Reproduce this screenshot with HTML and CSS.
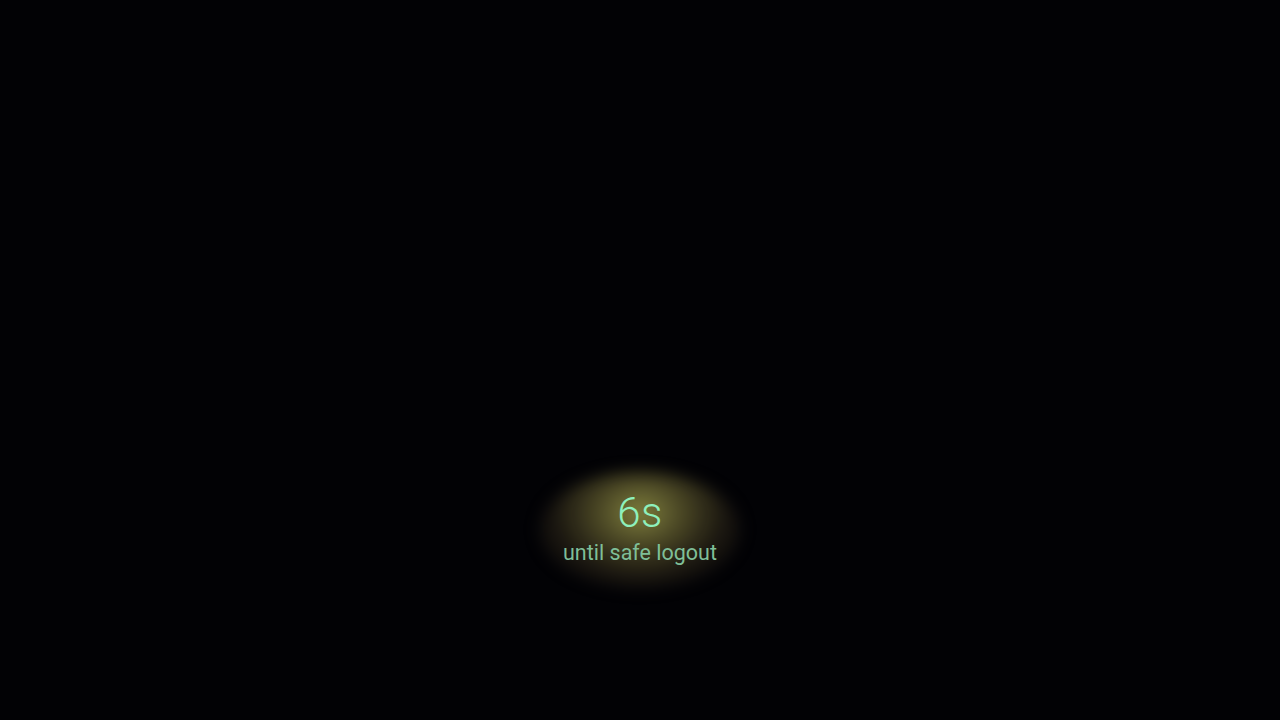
FILE: index.html
```html
<!DOCTYPE html>
<html>
<head>
<meta charset="utf-8">
<link rel="stylesheet" href="styles.css">
</head>
<body>
<div class="screen">
  <div class="spacer"></div>
  <div class="countdown">
    <div class="glow"></div>
    <div class="secs">6s</div>
    <div class="label">until safe logout</div>
  </div>
</div>
</body>
</html>
```
FILE: styles.css
```css
html, body {
  margin: 0;
  padding: 0;
  width: 1280px;
  height: 720px;
  overflow: hidden;
  background: #020205;
}
.screen {
  width: 1280px;
  height: 720px;
  display: flex;
  flex-direction: column;
  align-items: center;
  background: #020205;
  font-family: Roboto, "Liberation Sans", sans-serif;
}
.spacer {
  height: 490px;
  flex: none;
}
.countdown {
  position: relative;
  display: flex;
  flex-direction: column;
  align-items: center;
}
.glow {
  position: absolute;
  left: 50%;
  top: 52%;
  width: 200px;
  height: 115px;
  transform: translate(-50%, -50%);
  border-radius: 50%;
  background: radial-gradient(ellipse at 50% 35%, rgba(135,135,65,0.95) 0%, rgba(105,100,50,0.7) 30%, rgba(65,55,35,0.38) 60%, rgba(0,0,0,0) 100%);
  filter: blur(8px);
}
.secs {
  position: relative;
  font-size: 42px;
  font-weight: 300;
  line-height: 46px;
  color: #8ef0bc;
  letter-spacing: 0.5px;
}
.label {
  position: relative;
  font-size: 21.5px;
  font-weight: 400;
  line-height: 26px;
  color: #7fbf98;
  margin-top: 4px;
}
```
